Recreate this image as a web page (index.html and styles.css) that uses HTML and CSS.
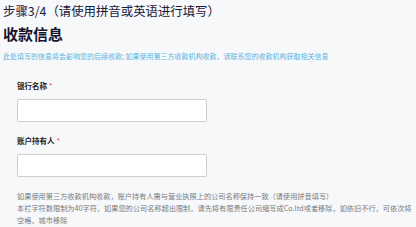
FILE: index.html
```html
<!DOCTYPE html>
<html>
<head>
  <meta charset="utf-8">
  <title>收款信息</title>
  <link rel="stylesheet" href="styles.css">
</head>
<body>
  <div class="page">
    <h2 class="step">步骤3/4（请使用拼音或英语进行填写）</h2>
    <h1 class="title">收款信息</h1>
    <p class="hint">此处填写的信息将会影响您的后续收款; 如果使用第三方收款机构收款，请联系您的收款机构获取相关信息</p>

    <div class="form">
      <div class="field">
        <label>银行名称<span class="req">*</span></label>
        <input type="text">
      </div>

      <div class="field">
        <label>账户持有人<span class="req">*</span></label>
        <input type="text">
      </div>

      <p class="note">
        如果使用第三方收款机构收款，账户持有人需与营业执照上的公司名称保持一致（请使用拼音填写）<br>
        本栏字符数限制为40字符，如果您的公司名称超出限制，请先将有限责任公司缩写成Co.ltd或者移除，如依旧不行，可依次将空格、城市移除
      </p>
    </div>
  </div>
</body>
</html>
```

FILE: styles.css
```css
body {
  background: #f7f8fa;
  margin: 0;
  padding: 0;
  font-family: "Noto Sans CJK SC", "Noto Sans", sans-serif;
}

.page {
  padding: 1px 4px 0 3px;
}

.step {
  margin: 0;
  font-size: 12.4px;
  font-weight: normal;
  line-height: 20px;
  color: #1a1a3a;
}

.title {
  margin: 2px 0 0;
  font-size: 15px;
  font-weight: bold;
  line-height: 22px;
  color: #14142e;
}

.hint {
  margin: 6px 0 0;
  font-size: 7px;
  line-height: 10px;
  color: #5ab4e2;
}

.form {
  padding-left: 14px;
}

.field {
  margin-top: 14px;
}

.field:first-child {
  margin-top: 20px;
}

.field label {
  display: block;
  font-size: 7.5px;
  font-weight: bold;
  line-height: 10px;
  color: #222;
  margin-bottom: 8px;
}

.req {
  color: #e23c3c;
  font-weight: normal;
  margin-left: 2px;
}

.field input {
  display: block;
  box-sizing: border-box;
  width: 190px;
  height: 23px;
  margin: 0;
  background: #fff;
  border: 1px solid #cfcfcf;
  border-radius: 2px;
}

.note {
  margin: 13px 0 0;
  font-size: 7.2px;
  line-height: 12px;
  color: #7a7a7a;
}
```
